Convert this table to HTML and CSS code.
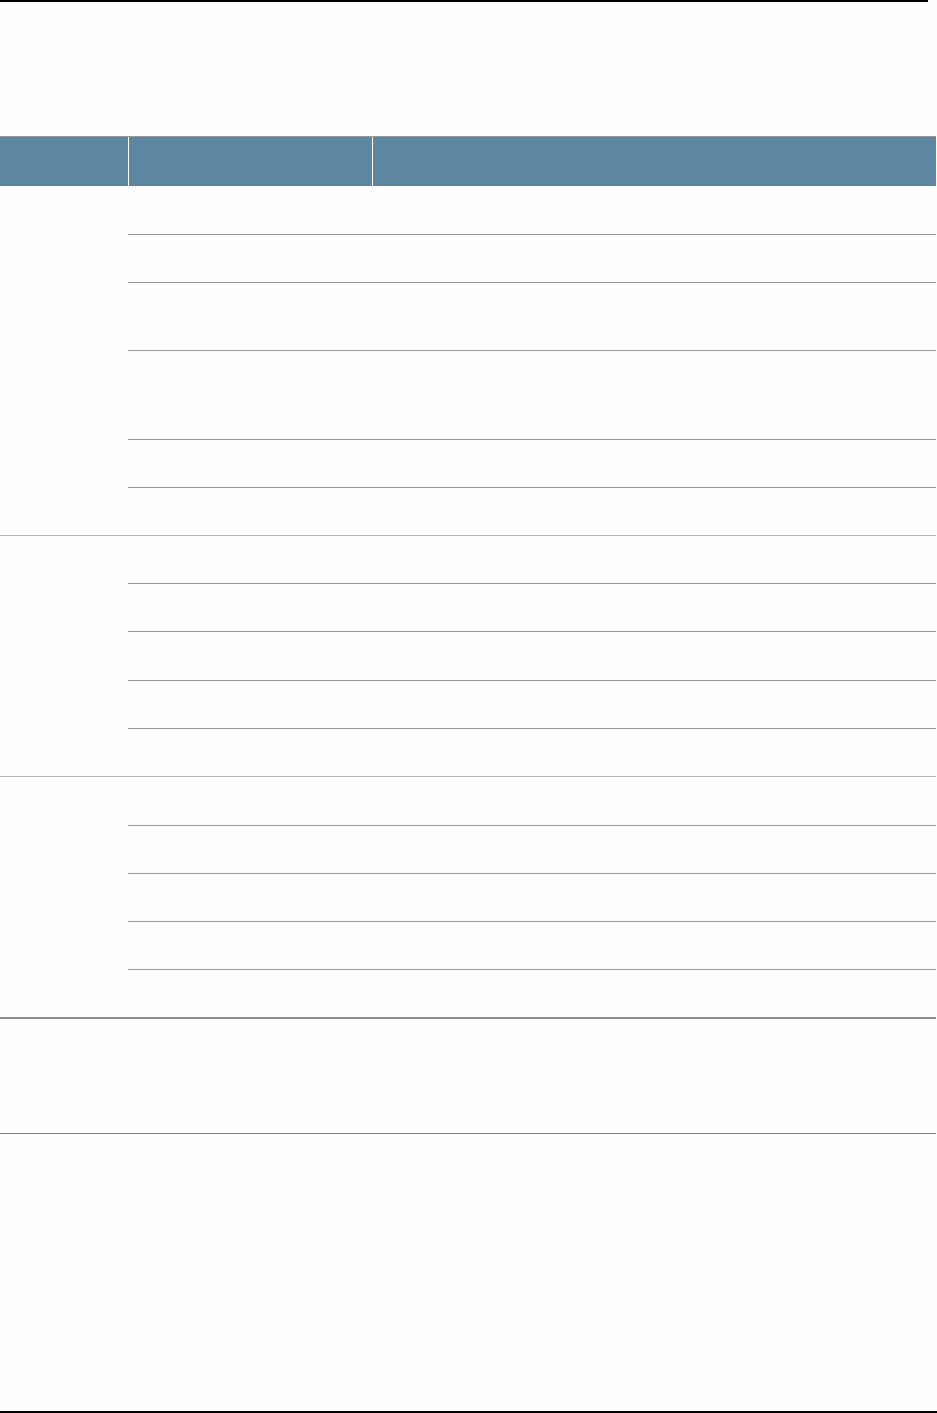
FILE: index.html
```html
<!DOCTYPE html>
<html>
<head>
<meta charset="utf-8">
<link rel="stylesheet" href="styles.css">
</head>
<body>
<div class="page">
  <div class="topbar"></div>
  <div class="table">
    <div class="thead">
      <div class="th"></div>
      <div class="th"></div>
      <div class="th"></div>
    </div>
    <div class="group">
      <div class="g-label"></div>
      <div class="g-rows">
        <div class="row h49"></div>
        <div class="row h48"></div>
        <div class="row h68"></div>
        <div class="row h89"></div>
        <div class="row h48"></div>
        <div class="row last"></div>
      </div>
    </div>
    <div class="group">
      <div class="g-label"></div>
      <div class="g-rows">
        <div class="row h48"></div>
        <div class="row h48"></div>
        <div class="row h49"></div>
        <div class="row h48"></div>
        <div class="row last"></div>
      </div>
    </div>
    <div class="group final">
      <div class="g-label"></div>
      <div class="g-rows">
        <div class="row h49"></div>
        <div class="row h48"></div>
        <div class="row h48"></div>
        <div class="row h48"></div>
        <div class="row last"></div>
      </div>
    </div>
  </div>
  <div class="rule"></div>
  <div class="bottombar"></div>
</div>
</body>
</html>
```

FILE: styles.css
```css
html, body {
  margin: 0;
  padding: 0;
  background: #fefefe;
  font-family: "Liberation Sans", Arial, sans-serif;
}
.page {
  width: 937px;
  height: 1413px;
  display: flex;
  flex-direction: column;
}
.topbar {
  width: 928px;
  height: 2px;
  background: #000;
}
.table {
  width: 936px;
  margin-top: 134px;
}
.thead {
  display: grid;
  grid-template-columns: 128px 243px 1fr;
  column-gap: 1px;
  background: #ffffff;
  border-top: 1px solid #9a9a9a;
  height: 50px;
  box-sizing: border-box;
}
.th {
  background: #5d87a1;
}
.group {
  display: flex;
  border-bottom: 1px solid #b8b8b8;
}
.group.final {
  border-bottom: 2px solid #8c8c8c;
}
.g-label {
  width: 128px;
  flex: none;
}
.g-rows {
  flex: 1;
  display: flex;
  flex-direction: column;
}
.row {
  box-sizing: border-box;
  border-bottom: 1px solid #9a9a9a;
}
.row.last {
  height: 47px;
  border-bottom: none;
}
.h48 { height: 48px; }
.h49 { height: 49px; }
.h68 { height: 68px; }
.h89 { height: 89px; }
.rule {
  width: 936px;
  height: 1px;
  background: #5b87a0;
  margin-top: 114px;
}
.bottombar {
  width: 937px;
  height: 2px;
  background: #000;
  margin-top: auto;
}
```
